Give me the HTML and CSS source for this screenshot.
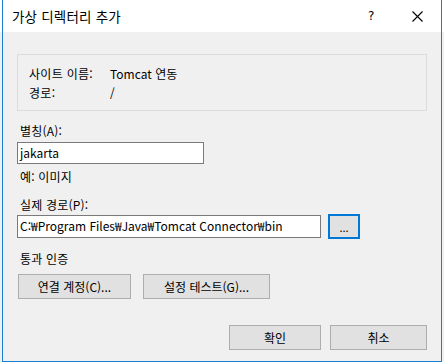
FILE: index.html
```html
<!DOCTYPE html>
<html lang="ko">
<head>
<meta charset="utf-8">
<link rel="stylesheet" href="styles.css">
</head>
<body>
<div class="window">
  <div class="titlebar">
    <span class="title">가상 디렉터리 추가</span>
    <span class="help">?</span>
    <span class="close">
      <svg width="11" height="11" viewBox="0 0 11 11"><path d="M0.5 0.5 L10.5 10.5 M10.5 0.5 L0.5 10.5" stroke="#000" stroke-width="1.1" fill="none"/></svg>
    </span>
  </div>
  <div class="content">
    <div class="groupbox">
      <div class="info-row"><span class="info-label">사이트 이름:</span><span>Tomcat 연동</span></div>
      <div class="info-row"><span class="info-label">경로:</span><span>/</span></div>
    </div>
    <div class="label label-alias">별칭(A):</div>
    <div class="input input-alias">jakarta</div>
    <div class="label label-example">예: 이미지</div>
    <div class="label label-path">실제 경로(P):</div>
    <div class="path-row">
      <div class="input input-path">C:₩Program Files₩Java₩Tomcat Connector₩bin</div>
      <div class="btn btn-browse">...</div>
    </div>
    <div class="label label-auth">통과 인증</div>
    <div class="auth-row">
      <div class="btn btn-connect">연결 계정(C)...</div>
      <div class="btn btn-test">설정 테스트(G)...</div>
    </div>
    <div class="footer">
      <div class="btn btn-ok">확인</div>
      <div class="btn btn-cancel">취소</div>
    </div>
  </div>
</div>
</body>
</html>
```
FILE: styles.css
```css
html, body {
  margin: 0;
  padding: 0;
}
body {
  width: 444px;
  height: 364px;
  background: linear-gradient(to bottom, #ffffff 0, #ffffff 32px, #f0f0f0 32px, #f0f0f0 362px, #ffffff 362px);
  font-family: "Noto Sans CJK KR", "Noto Sans", sans-serif;
  font-size: 12px;
  color: #000;
  overflow: hidden;
}
.window {
  margin-left: 2px;
  width: 438px;
  height: 361px;
  border-left: 1px solid #1a7fd4;
  border-right: 1px solid #1a7fd4;
  border-bottom: 1px solid #1a7fd4;
  background: #f0f0f0;
  display: flex;
  flex-direction: column;
}
.titlebar {
  height: 32px;
  background: #ffffff;
  display: flex;
  align-items: center;
  flex-shrink: 0;
}
.title {
  margin-left: 9px;
  font-size: 13.5px;
  line-height: 16px;
  letter-spacing: 0.2px;
  flex: 1;
}
.help {
  width: 10px;
  margin-right: 34px;
  font-family: "DejaVu Sans", sans-serif;
  font-size: 12px;
  line-height: 16px;
}
.close {
  width: 11px;
  height: 11px;
  margin-right: 18px;
  display: flex;
}
.content {
  padding: 22px 14px 0 14px;
  display: flex;
  flex-direction: column;
}
.groupbox {
  height: 55px;
  border: 1px solid #dcdcdc;
  display: flex;
  flex-direction: column;
  justify-content: center;
}
.info-row {
  display: flex;
  height: 19px;
  line-height: 19px;
  padding-left: 11px;
}
.info-label {
  width: 81px;
  letter-spacing: 0.3px;
}
.label {
  line-height: 19px;
  height: 19px;
  padding-left: 3px;
  letter-spacing: 0.2px;
}
.label-alias { margin-top: 10px; }
.input {
  box-sizing: border-box;
  background: #fff;
  border: 1px solid #7a7a7a;
  padding-left: 2px;
  line-height: 19px;
  white-space: nowrap;
  overflow: hidden;
}
.input-alias {
  margin-top: 2px;
  width: 187px;
  height: 22px;
}
.label-example { margin-top: 3px; }
.label-path { margin-top: 9px; }
.path-row {
  display: flex;
  align-items: center;
  gap: 7px;
}
.input-path {
  width: 304px;
  height: 23px;
  line-height: 20px;
}
.btn {
  box-sizing: border-box;
  height: 25px;
  background: #e1e1e1;
  border: 1px solid #adadad;
  display: flex;
  align-items: center;
  justify-content: center;
  line-height: 16px;
}
.btn-browse {
  width: 32px;
  border: 2px solid #0078d7;
  font-size: 11px;
}
.label-auth { margin-top: 10px; }
.auth-row {
  display: flex;
  gap: 12px;
  margin-top: 6px;
  padding-left: 1px;
}
.btn-connect { width: 113px; }
.btn-test { width: 127px; }
.footer {
  display: flex;
  justify-content: flex-end;
  gap: 9px;
  margin-top: 26px;
}
.btn-ok { width: 92px; }
.btn-cancel { width: 97px; }
```
